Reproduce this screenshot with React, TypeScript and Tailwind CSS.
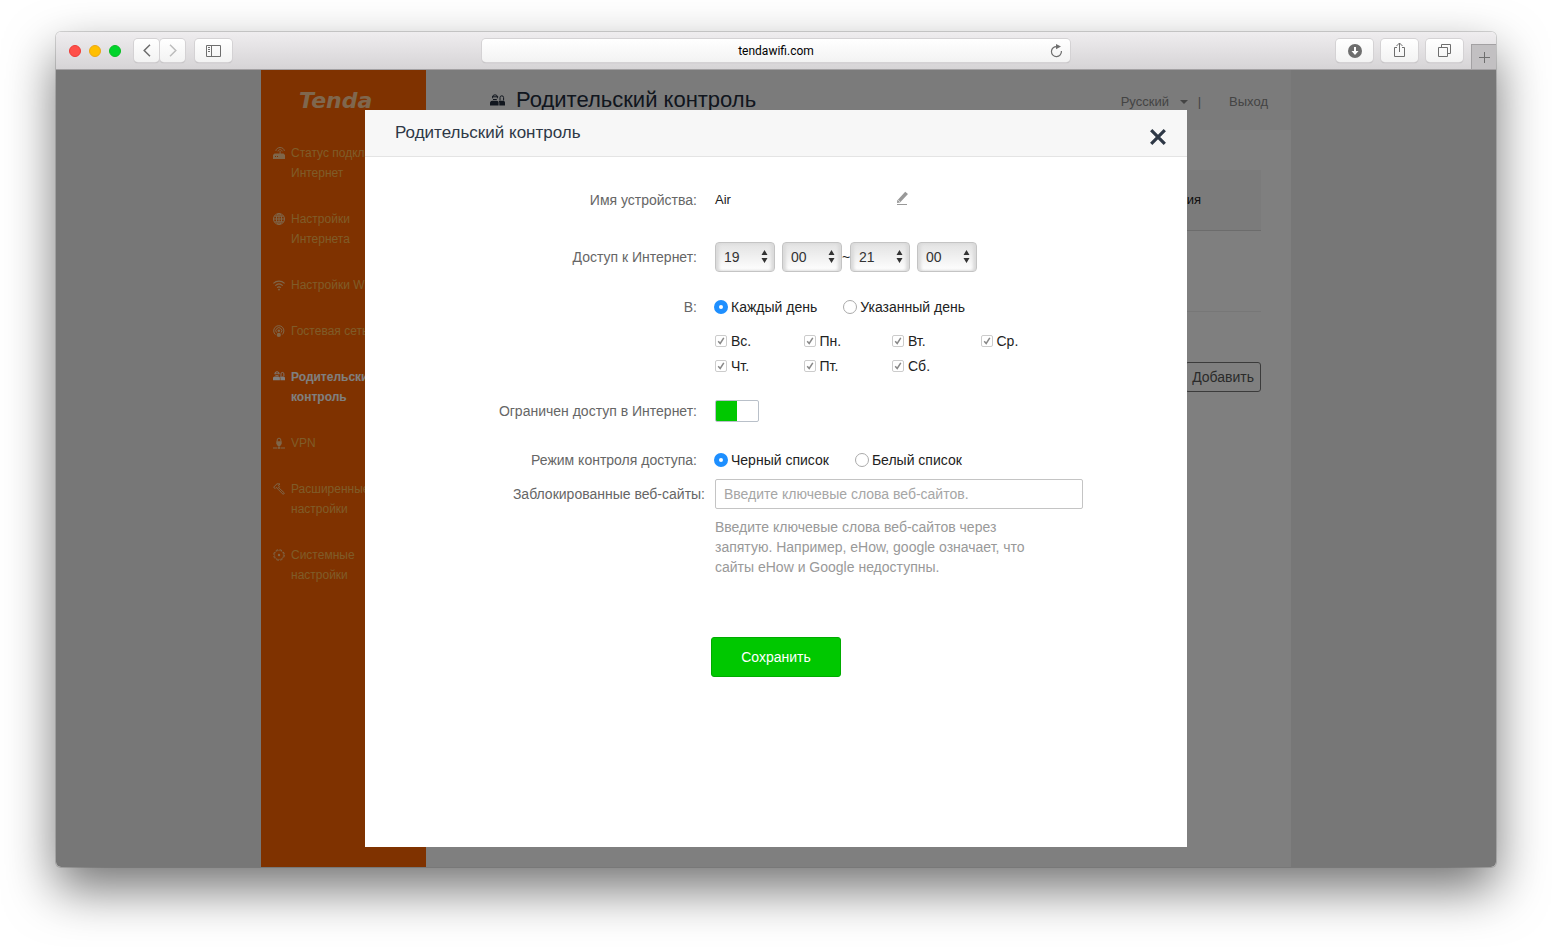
import React from 'react';

interface NavItem {
  lines: string[];
  icon: React.ReactNode;
  active?: boolean;
}

const FamilyIcon = () => (
  <svg viewBox="0 0 15 12" className="w-full" fill="currentColor">
    <path d="M0 11.500V8.800C0 7.700.9 7 2.200 6.800h4.600c1.200.2 1.800.9 1.800 2v2.700z" />
    <path d="M9.300 11.500V9c0-.8-.2-1.300-.7-1.800.3-.2.8-.4 1.400-.4h3.200c1.100.1 1.800.9 1.800 1.900v2.800z" />
    <path d="M2.600 4.300V3.200a2.400 2.400 0 0 1 4.800 0v1.100M2 2.800h6.200M10 6.500V3.600a1.800 1.800 0 0 1 3.600 0v2.900M3 5.500h3.800" fill="none" stroke="currentColor" />
  </svg>
);

const RouterIcon = () => (
  <svg viewBox="0 0 12 12" className="w-full" fill="none" stroke="currentColor">
    <path d="M2.800 3.900C3.600-.6 10.600-.6 11.400 3.900M5 4.400c.5-2.300 3.700-2.300 4.200 0M7.100 4v3" />
    <path d="M1.500 6.500h9L12 8v4H0V8z" fill="currentColor" stroke="none" />
    <path d="M2 9.500h1M4 9.500h1" stroke="#ff6500" />
  </svg>
);

const GlobeIcon = () => (
  <svg viewBox="0 0 12 12" className="w-full" fill="none" stroke="currentColor">
    <circle cx="6" cy="6" r="5.500" />
    <ellipse cx="6" cy="6" rx="2.600" ry="5.500" />
    <path d="M6 .5v11M.5 6h11M1.400 3.200h9.200M1.400 8.800h9.200" />
  </svg>
);

const WifiIcon = () => (
  <svg viewBox="0 0 12 12" className="w-full" fill="none" stroke="currentColor" strokeWidth="1.100">
    <path d="M.4 4.400c3.200-3 8-3 11.200 0M2.300 6.600c2.200-2 5.200-2 7.400 0M4.100 8.700c1.200-1 2.600-1 3.800 0" />
    <circle cx="6" cy="10.600" r=".9" fill="currentColor" stroke="none" />
  </svg>
);

const GuestIcon = () => (
  <svg viewBox="0 0 12 12" className="w-full" fill="none" stroke="currentColor">
    <path d="M2.400 9.600A5.100 5.100 0 1 1 9.200 9.600M3.500 7.600A3 3 0 1 1 8.100 7.600" />
    <circle cx="5.800" cy="5.800" r="1.300" fill="currentColor" stroke="none" />
    <circle cx="5.800" cy="9.900" r="2.100" fill="currentColor" stroke="none" />
  </svg>
);

const VpnIcon = () => (
  <svg viewBox="0 0 12 12" className="w-full" fill="none" stroke="currentColor">
    <path d="M4.200 4.500V3a1.800 1.800 0 0 1 3.600 0v1.500M0 11h4.500M7.500 11H12M6 8v3" />
    <path d="M3.300 4.200h5.400v2.600L7.200 9H4.800L3.300 6.800z" fill="currentColor" stroke="none" />
    <circle cx="6" cy="11" r="1" fill="currentColor" stroke="none" />
  </svg>
);

const HammerIcon = () => (
  <svg viewBox="0 0 12 12" className="w-full" fill="none" stroke="currentColor">
    <path d="M.6 4.200 4 .8l3 .2L5.500 2.300 6.500 3.800 4.800 5.500 3.200 4.500 2.200 5.500z" />
    <path d="m6.200 5.200 5.200 4.800-1.200 1.400-5.200-5.200" />
  </svg>
);

const GearIcon = () => (
  <svg viewBox="0 0 12 12" className="w-full" fill="none" stroke="currentColor">
    <circle cx="6" cy="6" r="5.300" strokeDasharray="2.600 1.560" />
    <circle cx="6" cy="6" r="4.500" strokeWidth=".5" />
    <circle cx="6" cy="6" r="1.200" fill="currentColor" stroke="none" />
  </svg>
);

const navItems: NavItem[] = [
  { lines: ['Статус подключения', 'Интернет'], icon: <RouterIcon /> },
  { lines: ['Настройки', 'Интернета'], icon: <GlobeIcon /> },
  { lines: ['Настройки Wi-Fi'], icon: <WifiIcon /> },
  { lines: ['Гостевая сеть'], icon: <GuestIcon /> },
  { lines: ['Родительский', 'контроль'], icon: <FamilyIcon />, active: true },
  { lines: ['VPN'], icon: <VpnIcon /> },
  { lines: ['Расширенные', 'настройки'], icon: <HammerIcon /> },
  { lines: ['Системные', 'настройки'], icon: <GearIcon /> }
];

const days = ['Вс.', 'Пн.', 'Вт.', 'Ср.', 'Чт.', 'Пт.', 'Сб.'];
const hours = Array.from({ length: 24 }, (_, i) => String(i).padStart(2, '0'));
const minutes = Array.from({ length: 12 }, (_, i) => String(i * 5).padStart(2, '0'));

const toolButton =
  'flex h-[23px] items-center justify-center rounded bg-linear-to-b from-white to-[#f3f3f3] text-[#6e6e6e] shadow-[0_0_0_1px_#d4d2d4,0_1px_1px_#a9a7a9]';

const BrowserToolbar = () => (
  <div className="flex h-[38px] items-center border-b border-[#a3a1a3] bg-linear-to-b from-[#efedef] to-[#d6d4d6]">
    <div className="flex flex-1 items-center">
      <div className="ml-[13px] flex gap-2">
        <span className="size-3 rounded-full border border-[#ee3a36] bg-[#ff4f49]" />
        <span className="size-3 rounded-full border border-[#eba713] bg-[#ffbf00]" />
        <span className="size-3 rounded-full border border-[#09bd24] bg-[#00d42b]" />
      </div>
      <div className="ml-[13px] flex gap-px">
        <button type="button" aria-label="Назад" className={`${toolButton} w-[25px]`}>
          <svg width="8" height="13" viewBox="0 0 8 13" fill="none" stroke="currentColor" strokeWidth="1.500">
            <path d="M7 .8 1.200 6.500 7 12.200" />
          </svg>
        </button>
        <button type="button" aria-label="Вперёд" className={`${toolButton} w-[25px]`}>
          <svg width="8" height="13" viewBox="0 0 8 13" fill="none" stroke="#bdbdbd" strokeWidth="1.500">
            <path d="m1 .8 5.800 5.700L1 12.200" />
          </svg>
        </button>
      </div>
      <button type="button" aria-label="Боковая панель" className={`${toolButton} ml-[10px] w-[37px]`}>
        <svg width="15" height="12" viewBox="0 0 15 12" fill="none" stroke="currentColor">
          <path d="M.5.5h14v11H.5zM5.500.5v11M2 2.500h2M2 4.500h2M2 6.500h2" />
        </svg>
      </button>
    </div>
    <div className="flex h-[23px] w-[588px] items-center rounded bg-linear-to-b from-white to-[#f3f3f3] shadow-[0_0_0_1px_#d4d2d4,0_1px_1px_#a9a7a9]">
      <input
        type="text"
        aria-label="Адрес"
        defaultValue="tendawifi.com"
        className="min-w-0 flex-1 pl-6 text-center font-['Roboto','Liberation_Sans',sans-serif] text-[12px] text-black outline-none"
      />
      <button type="button" aria-label="Обновить" className="w-6 pl-1 text-[#6e6e6e]">
        <svg width="13" height="14" viewBox="0 0 13 14" fill="none" stroke="currentColor" strokeWidth="1.200">
          <path d="M7 2.600A5 5 0 1 0 11.400 7" />
          <path d="M6 0v5.200L11 2.600z" fill="currentColor" stroke="none" />
        </svg>
      </button>
    </div>
    <div className="flex h-full flex-1 items-center justify-end gap-2">
      <button type="button" aria-label="Загрузки" className={`${toolButton} w-[37px]`}>
        <svg width="14" height="14" viewBox="0 0 14 14">
          <circle cx="7" cy="7" r="7" fill="currentColor" />
          <path d="M6 3h2v4h2.500L7 11 3.500 7H6z" fill="#fff" />
        </svg>
      </button>
      <button type="button" aria-label="Поделиться" className={`${toolButton} w-[37px]`}>
        <svg width="13" height="16" viewBox="0 0 13 16" fill="none" stroke="currentColor" className="mb-px">
          <path d="M4 5.500H1.500v9h10v-9H9M6.500 10V1M3.500 4l3-3 3 3" />
        </svg>
      </button>
      <button type="button" aria-label="Вкладки" className={`${toolButton} w-[37px]`}>
        <svg width="13" height="13" viewBox="0 0 13 13" fill="none" stroke="currentColor">
          <path d="M.5 3.500h9v9h-9zM3.500 3.500v-3h9v9h-3" />
        </svg>
      </button>
      <button
        type="button"
        aria-label="Новая вкладка"
        className="flex h-[25px] w-[25px] items-center justify-center self-end border-t border-l border-[#a3a1a3] bg-[#c2c0c2] text-[#6e6e6e]"
      >
        <svg width="11" height="11" viewBox="0 0 11 11" stroke="currentColor">
          <path d="M5.500 0v11M0 5.500h11" />
        </svg>
      </button>
    </div>
  </div>
);

const Sidebar = () => (
  <aside className="w-[165px] shrink-0 bg-[#ff6500]">
    <div className="flex h-[60px] items-center pl-[38px] font-['DejaVu_Sans',sans-serif] text-[22px] font-bold text-[#ffcf9c] italic">
      Tenda
    </div>
    <nav>
      {navItems.map((item) => (
        <a
          key={item.lines.join(' ')}
          href="#"
          className={`flex gap-[6px] py-[13px] pl-3 text-[12px] leading-5 whitespace-nowrap ${
            item.active ? 'font-bold text-white' : 'text-[#ffb752]'
          }`}
        >
          <span className={`mt-1 w-3 shrink-0 ${item.active ? 'text-white' : 'text-[#ffcc94]'}`}>{item.icon}</span>
          <span>
            {item.lines.map((line) => (
              <span key={line} className="block">
                {line}
              </span>
            ))}
          </span>
        </a>
      ))}
    </nav>
  </aside>
);

const RouterPage = () => (
  <div className="mx-auto flex w-full max-w-[1030px] flex-1 bg-white">
    <Sidebar />
    <div className="min-w-0 flex-1">
      <header className="flex h-[60px] items-center bg-[#f7f7f7] pr-[23px] pl-16 text-[#222c3c]">
        <span className="w-[15px]">
          <FamilyIcon />
        </span>
        <h1 className="ml-[11px] flex-1 pb-[2px] text-[22px]">Родительский контроль</h1>
        <div className="flex items-center pt-[3px] text-[13px] text-[#888]">
          <select aria-label="Язык" className="appearance-none">
            <option>Русский</option>
          </select>
          <svg width="8" height="4" viewBox="0 0 8 4" fill="currentColor" className="ml-[10px]">
            <path d="M0 0h8L4 4z" />
          </svg>
          <span className="ml-[10px]">|</span>
          <a href="#" className="ml-7">
            Выход
          </a>
        </div>
      </header>
      <main className="px-[30px] pt-10">
        <table className="w-full text-[13px]">
          <thead>
            <tr className="h-[60px] border-b border-[#d8d8d8] bg-[#f7f7f7]">
              <th className="pr-[60px] text-right font-medium text-[#222]">Операция</th>
            </tr>
          </thead>
          <tbody>
            <tr className="h-[81px] border-b border-[#eee]">
              <td />
            </tr>
          </tbody>
        </table>
        <div className="mt-[50px] flex justify-end">
          <button type="button" className="h-[30px] rounded-[3px] border border-[#777] px-[6px] text-sm text-[#555]">
            Добавить
          </button>
        </div>
      </main>
    </div>
  </div>
);

const TimeSelect = ({ label, value, options }: { label: string; value: string; options: string[] }) => (
  <div className="relative h-[30px] w-[60px]">
    <select
      aria-label={label}
      defaultValue={value}
      className="h-full w-full appearance-none rounded border border-[#c4c4c4] bg-linear-to-b from-[#e2e2e2] to-white pl-2 text-sm text-[#333] shadow-[inset_3px_0_3px_#dadada,inset_-3px_0_3px_#dadada]"
    >
      {options.map((o) => (
        <option key={o}>{o}</option>
      ))}
    </select>
    <svg width="7" height="13" viewBox="0 0 7 13" fill="#333" className="pointer-events-none absolute top-2 right-[7px]">
      <path d="M3.500 0 6.500 5h-6zM3.500 13l-3-5h6z" />
    </svg>
  </div>
);

const Radio = ({ name, label, checked }: { name: string; label: string; checked?: boolean }) => (
  <label className="flex items-center gap-[3px] text-[#222]">
    <input
      type="radio"
      name={name}
      defaultChecked={checked}
      className="size-[14px] appearance-none rounded-full border border-[#aaa] bg-white checked:border-[5px] checked:border-[#1e8fff]"
    />
    {label}
  </label>
);

const DayCheckbox = ({ label }: { label: string }) => (
  <label className="flex items-center gap-1 text-[#222]">
    <span className="relative size-3">
      <input type="checkbox" defaultChecked disabled className="block size-3 appearance-none rounded-xs border border-[#ccc] bg-white" />
      <svg viewBox="0 0 12 12" fill="none" stroke="#888" strokeWidth="1.500" className="pointer-events-none absolute inset-0">
        <path d="m3.200 6.200 2 2.300 3.600-5.700" />
      </svg>
    </span>
    {label}
  </label>
);

const fieldRow = 'grid grid-cols-[332px_1fr] items-center gap-x-[18px]';

const ParentalControlDialog = () => (
  <section role="dialog" aria-labelledby="dialog-title" className="flex w-[822px] max-w-full flex-col bg-white">
    <header className="flex h-[47px] items-center justify-between border-b border-[#e4e4e4] bg-[#f7f7f7] pr-[21px] pl-[30px]">
      <h2 id="dialog-title" className="pb-px text-[17px] leading-5 text-[#2e3846]">
        Родительский контроль
      </h2>
      <button type="button" aria-label="Закрыть" className="mt-2 text-[#2e3846]">
        <svg width="16" height="16" viewBox="0 0 16 16" stroke="currentColor" strokeWidth="3.200">
          <path d="m1.200 1.200 13.600 13.600M14.800 1.200 1.200 14.800" />
        </svg>
      </button>
    </header>
    <form className="flex flex-col pt-[33px] text-sm leading-5 text-[#666]">
      <div className={fieldRow}>
        <span className="text-right">Имя устройства:</span>
        <div className="flex items-center">
          <span className="w-[181px] text-[13px] text-[#222]">Air</span>
          <button type="button" aria-label="Изменить имя" className="text-[#999]">
            <svg width="13" height="14" viewBox="0 0 13 14" fill="currentColor" className="mb-1">
              <path d="M1.200 9.500 9.200.8 12 3 4 11.400 1 12zM1 13h10v1H1z" />
              <path d="m2.200 9.200 2 1.800" stroke="#fff" strokeWidth=".7" />
            </svg>
          </button>
        </div>
      </div>
      <div className={`${fieldRow} mt-8`}>
        <span className="text-right">Доступ к Интернет:</span>
        <div className="flex items-center">
          <TimeSelect label="Час начала" value="19" options={hours} />
          <span className="w-[7px]" />
          <TimeSelect label="Минуты начала" value="00" options={minutes} />
          <span className="w-2 text-[#222]">~</span>
          <TimeSelect label="Час окончания" value="21" options={hours} />
          <span className="w-[7px]" />
          <TimeSelect label="Минуты окончания" value="00" options={minutes} />
        </div>
      </div>
      <div className={`${fieldRow} mt-[25px]`}>
        <span className="text-right">В:</span>
        <div className="-ml-px flex gap-[26px]">
          <Radio name="period" label="Каждый день" checked />
          <Radio name="period" label="Указанный день" />
        </div>
      </div>
      <div className={`${fieldRow} mt-[14px]`}>
        <div className="col-start-2 grid w-[354px] grid-cols-4 gap-y-[5px]">
          {days.map((day) => (
            <DayCheckbox key={day} label={day} />
          ))}
        </div>
      </div>
      <div className={`${fieldRow} mt-6`}>
        <label htmlFor="limit-access" className="text-right">
          Ограничен доступ в Интернет:
        </label>
        <input
          id="limit-access"
          type="checkbox"
          role="switch"
          defaultChecked
          className="h-[22px] w-11 appearance-none rounded-xs border border-[#b9c0c9] bg-[linear-gradient(to_right,#00c800_50%,#fff_50%)]"
        />
      </div>
      <div className={`${fieldRow} mt-7`}>
        <span className="text-right">Режим контроля доступа:</span>
        <div className="-ml-px flex gap-[26px]">
          <Radio name="mode" label="Черный список" checked />
          <Radio name="mode" label="Белый список" />
        </div>
      </div>
      <div className="mt-[9px] grid grid-cols-[340px_1fr] items-center gap-x-[10px]">
        <label htmlFor="sites" className="text-right">
          Заблокированные веб-сайты:
        </label>
        <input
          id="sites"
          type="text"
          placeholder="Введите ключевые слова веб-сайтов."
          className="h-[30px] w-[368px] rounded-xs border border-[#c4c4c4] px-2 placeholder:text-[#a6a6a6]"
        />
      </div>
      <div className={`${fieldRow} mt-2`}>
        <p className="col-start-2 w-[340px] text-[#999]">
          Введите ключевые слова веб-сайтов через запятую. Например, eHow, google означает, что сайты eHow и Google
          недоступны.
        </p>
      </div>
      <button type="submit" className="mt-[60px] h-10 w-[130px] self-center rounded-[3px] border border-[#00ab00] bg-[#00c800] text-white">
        Сохранить
      </button>
    </form>
  </section>
);

const App: React.FC = () => {
  return (
    <div className="flex min-h-screen flex-col bg-white px-14 pt-8 pb-20 font-['Liberation_Sans',Arial,sans-serif]">
      <div className="flex flex-1 flex-col overflow-hidden rounded-[5px] shadow-[0_0_0_1px_rgba(0,0,0,0.15),0_22px_50px_rgba(0,0,0,0.55)]">
        <BrowserToolbar />
        <div className="relative flex flex-1 flex-col bg-[#efefef]">
          <RouterPage />
          <div className="absolute inset-0 flex justify-center bg-black/50 pt-10 pb-5">
            <ParentalControlDialog />
          </div>
        </div>
      </div>
    </div>
  );
};

export default App;
